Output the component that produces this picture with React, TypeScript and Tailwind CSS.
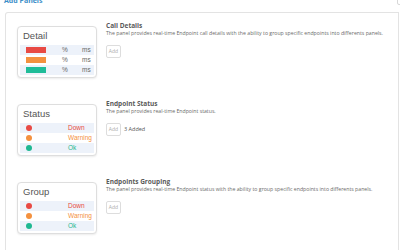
import React from 'react';

const rowBg = ['bg-[#edf2fa]', 'bg-white', 'bg-[#edf2fa]'];

const statusItems = [
  { label: 'Down', dot: 'bg-[#e84a44]', text: 'text-[#e84a44]' },
  { label: 'Warning', dot: 'bg-[#f4913f]', text: 'text-[#f4913f]' },
  { label: 'Ok', dot: 'bg-[#1fb891]', text: 'text-[#1fb891]' },
];

const bars = ['bg-[#e84a44]', 'bg-[#f4913f]', 'bg-[#1fbc98]'];

const Card = ({ title, children }: { title: string; children: React.ReactNode }) => {
  return (
    <div className="w-[80px] h-[52px] shrink-0 rounded-[4px] border border-[#dedede] bg-white shadow-[0_1px_2px_rgba(0,0,0,0.08)] pt-[3px] px-[2px]">
      <div className="pl-[3px] text-[9.5px] leading-[11px] text-[#555] font-['Liberation_Sans',Arial,sans-serif] mb-[4px]">
        {title}
      </div>
      {children}
    </div>
  );
};

const DetailCard = () => (
  <Card title="Detail">
    {bars.map((bar, i) => (
      <div key={i} className={`flex items-center h-[10px] ${rowBg[i]} text-[6.5px] text-[#666] font-['Liberation_Sans',Arial,sans-serif]`}>
        <span className={`ml-[6px] w-[20px] h-[6px] shrink-0 ${bar}`} />
        <span className="ml-[16px] w-[20px]">%</span>
        <span>ms</span>
      </div>
    ))}
  </Card>
);

const StatusCard = ({ title }: { title: string }) => (
  <Card title={title}>
    {statusItems.map((s, i) => (
      <div key={s.label} className={`flex items-center h-[10px] ${rowBg[i]} text-[6.5px] font-['Liberation_Sans',Arial,sans-serif]`}>
        <span className={`ml-[6px] w-[6px] h-[6px] shrink-0 rounded-full ${s.dot}`} />
        <span className={`ml-[36px] ${s.text}`}>{s.label}</span>
      </div>
    ))}
  </Card>
);

const Info = ({ title, text, added }: { title: string; text: string; added?: string }) => (
  <div className="ml-[9px] -mt-[4px] font-['Open_Sans',sans-serif]">
    <div className="text-[6.5px] leading-[8px] font-bold text-[#5a5a5a]">{title}</div>
    <div className="text-[5.2px] leading-[7px] text-[#6a6a6a] whitespace-nowrap">{text}</div>
    <div className="flex items-center mt-[8px]">
      <span className="w-[15px] h-[13px] flex items-center justify-center rounded-[2px] border border-[#dddddd] text-[5px] text-[#aaa]">
        Add
      </span>
      {added && <span className="ml-[3px] text-[5.5px] text-[#555]">{added}</span>}
    </div>
  </div>
);

export default function App() {
  return (
    <div className="relative w-[400px] h-[250px] overflow-hidden bg-white">
      <div className="h-[15px] pl-[4px]">
        <div className="-mt-[3px] text-[7px] leading-[8px] font-bold text-[#3a8dc8] font-['Open_Sans',sans-serif]">
          Add Panels
        </div>
      </div>
      <span className="absolute right-[-4px] top-[-5px] w-[7px] h-[10px] rounded-[2px] border border-[#d8d8d8]" />
      <div className="ml-[5px] mr-[1px] h-[240px] rounded-tl-[3px] border border-b-0 border-[#e3e3e3] pl-[11px] pt-[13px] flex flex-col gap-[26px]">
        <div className="flex">
          <DetailCard />
          <Info
            title="Call Details"
            text="The panel provides real-time Endpoint call details with the ability to group specific endpoints into differents panels."
          />
        </div>
        <div className="flex">
          <StatusCard title="Status" />
          <Info title="Endpoint Status" text="The panel provides real-time Endpoint status." added="3 Added" />
        </div>
        <div className="flex">
          <StatusCard title="Group" />
          <Info
            title="Endpoints Grouping"
            text="The panel provides real-time Endpoint status with the ability to group specific endpoints into differents panels."
          />
        </div>
      </div>
    </div>
  );
}
